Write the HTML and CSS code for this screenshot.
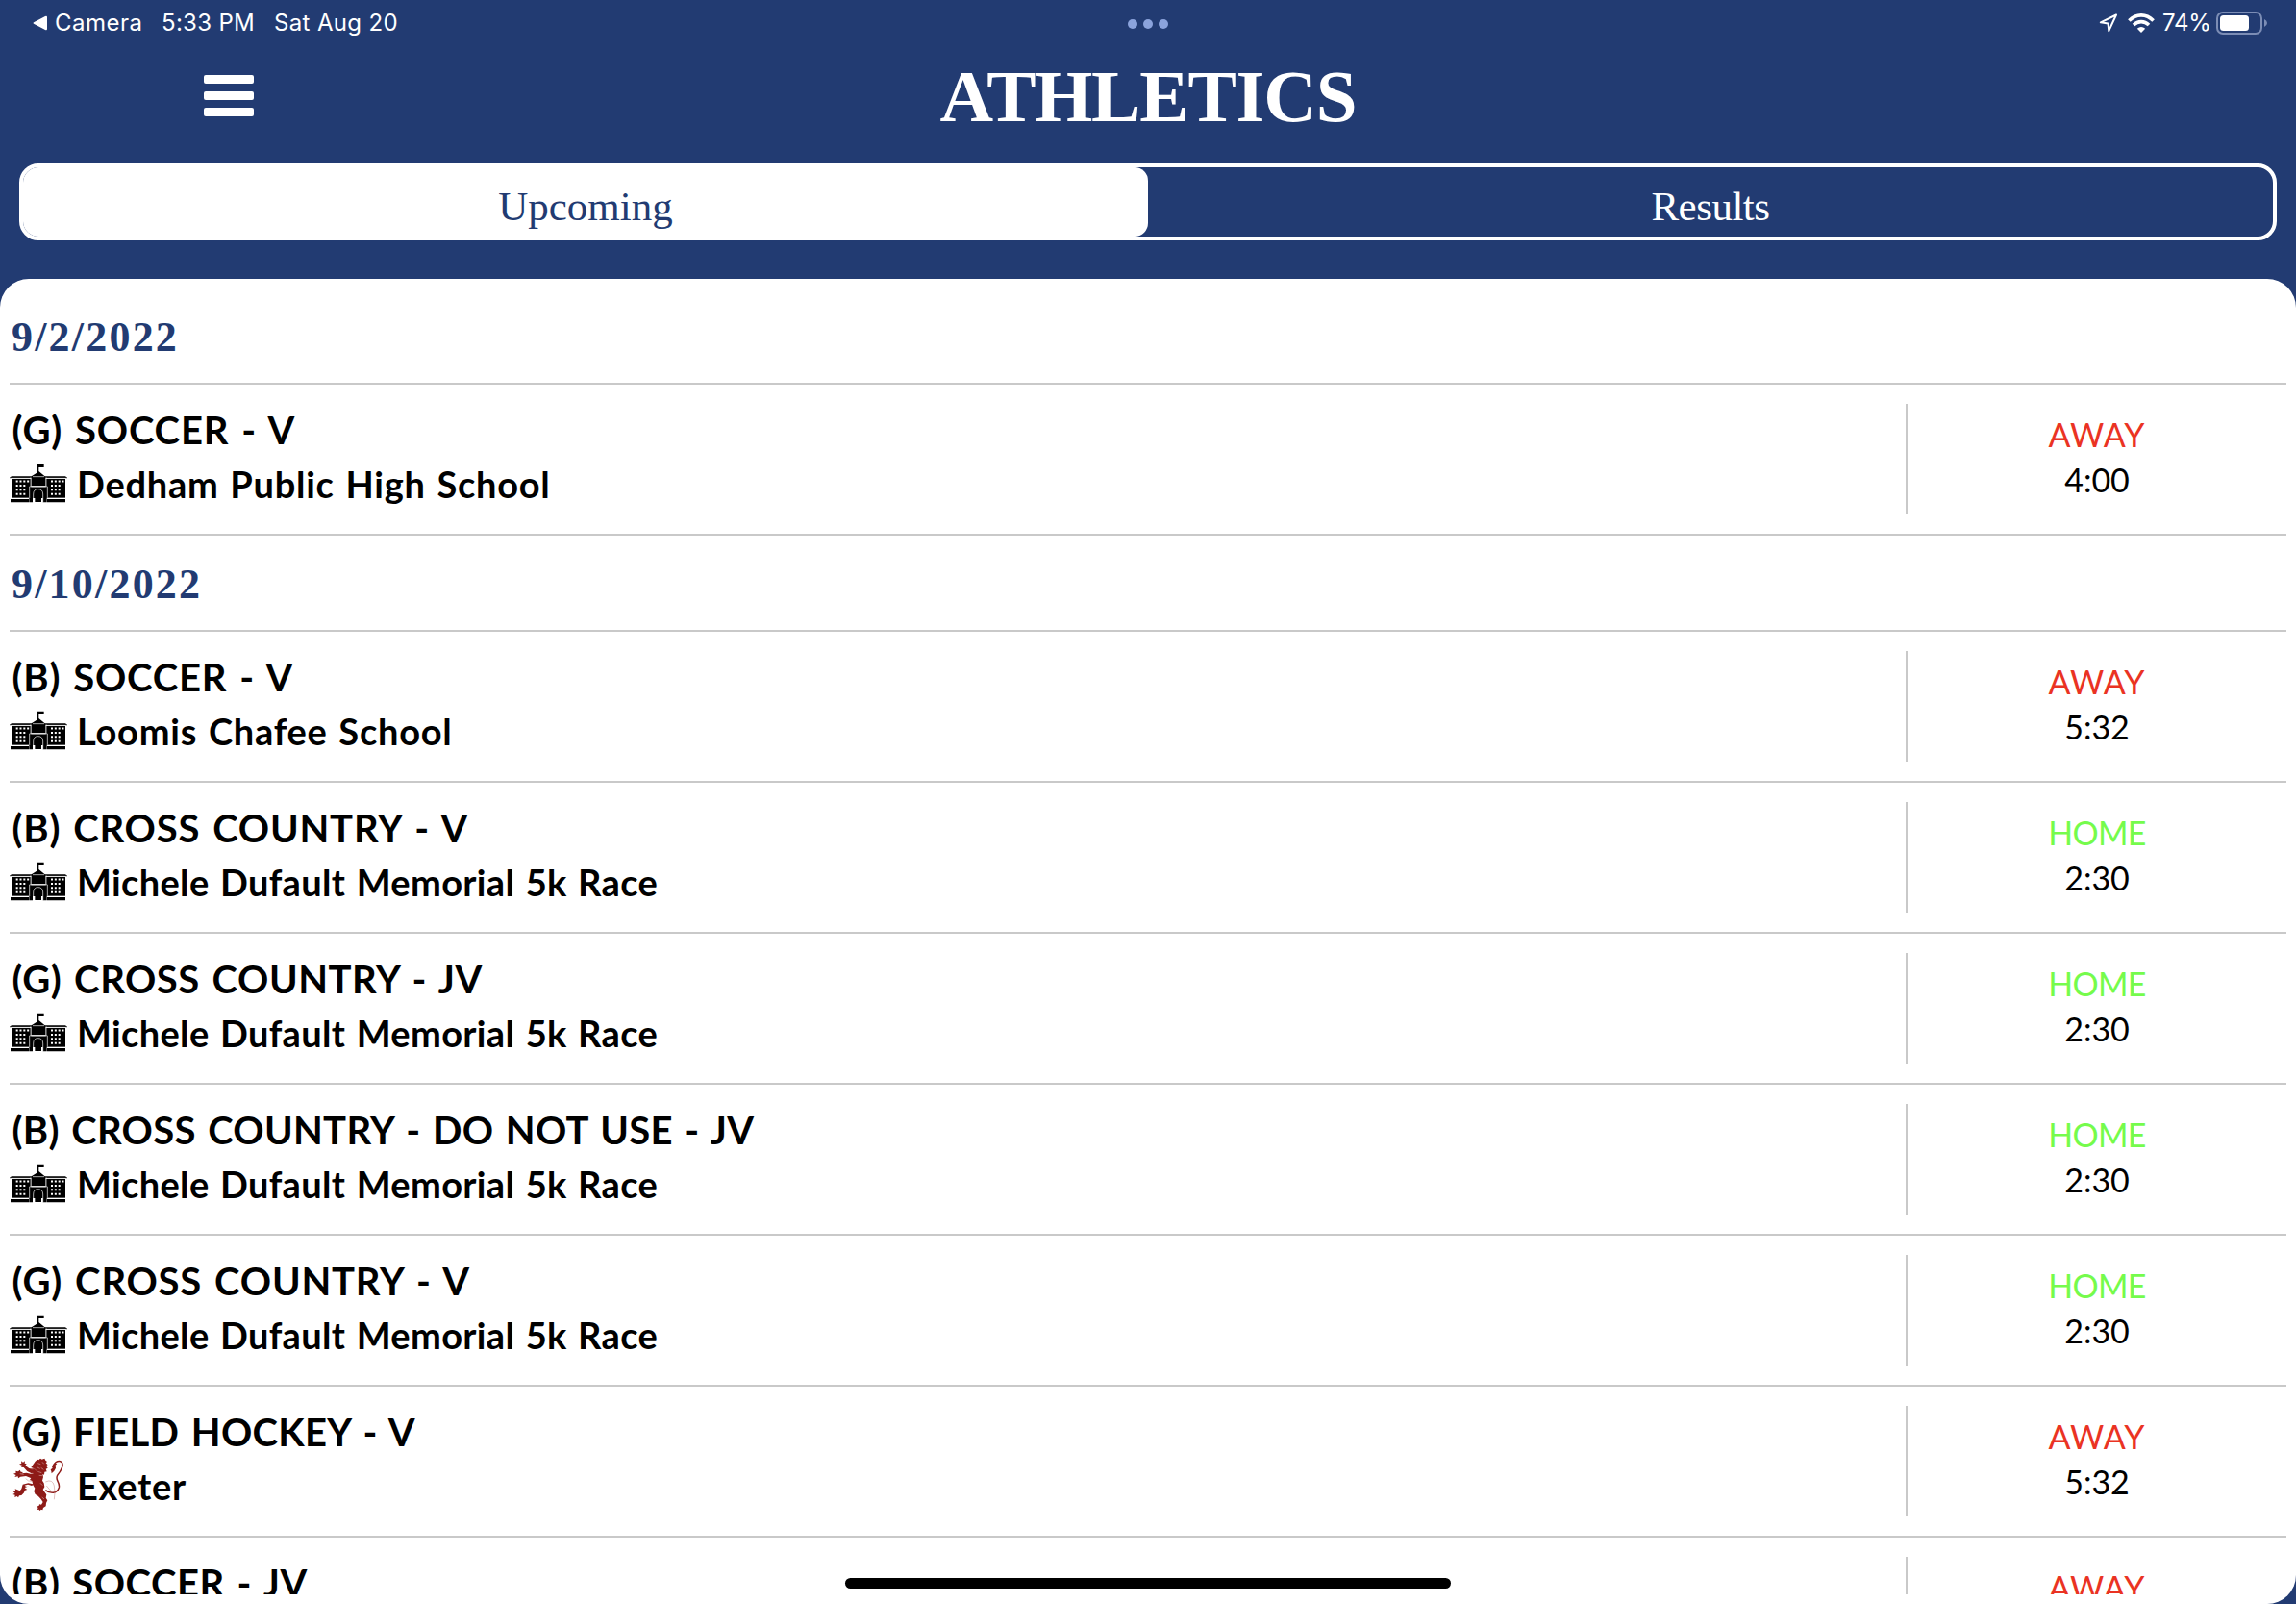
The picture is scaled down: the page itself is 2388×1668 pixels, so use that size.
FILE: index.html
```html
<!DOCTYPE html>
<html lang="en">
<head>
<meta charset="utf-8">
<title>Athletics</title>
<link rel="stylesheet" href="styles.css">
</head>
<body>
<svg class="defs" aria-hidden="true">
  <symbol id="school" viewBox="30 25 180 123">
    <path d="M117 54V27h20v10h-16v12l19 16h64l6 4v2H30v-2l6-4h62l19-12z"/>
    <path d="M36 73h61v59H36zM143 73h61v59h-61zM98 67h44v28H98z"/>
    <path d="M94 98h52v35H94z"/>
    <path d="M33 136h57v10H33zM147 136h57v10h-57zM91 132h11v14H91zM134 132h12v14h-12z"/>
    <path fill="none" stroke="#fff" stroke-width="2" d="M32 71h64M144 71h64M96 68v28M144 68v28M92 96.500h56M102 66h36M92 97v35M148 97v35M33 134h57M148 134h57M104 145v-24q0-16 15-16t15 16v24"/>
    <path d="M109 145v-23q0-11 10-11t10 11v23z"/>
    <path fill="none" stroke="#fff" stroke-width="6" stroke-dasharray="6 5.500" d="M50 80.500h41M50 94h29M50 107h29M50 120h29M159 80.500h41M159 94h29M159 107h29M159 120h29"/>
  </symbol>
  <symbol id="lion" viewBox="30 52 180 180">
    <g fill="#8e1b18">
      <path d="M110 66l7-6 4 2 5-5 5 3 8-3 3 6 5 4-4 4 6 6-5 3 5 7-6 3 3 8-7 1-1 9-5-2 2 9-3 11 5 8 2 12-5 8 4 6 7 10-2 10 5 8-4 8-1 10-8 5-2 7-5-2-3 4-4-4-5 1 3-6-4-4 7-3 1-4 6 1 5-8-6-9-9-10-9-5-4-10 3-9-6-10-3-13-7-3 4-6-5-5 7-2-3-6 8-1-3-6 7-2-9-1-4-4 10-3-8-3z"/>
      <path d="M110 102l-13 1-12-6-11-12-8-1 4-5-10-4 7-3-1-7 6 4 6-4-1 7 6 2-4 5 12 9 11 2 12-2z"/>
      <path d="M112 122l-16-4-15-6-17 2-7 5-1-6-10 2 4-6-8-4 8-3-1-6 8 2 5-5 3 6 7 1-4 4 15-2 16 4 17 4z"/>
      <path d="M116 140l-8-3-9 5-12-4-10 3 7 5-7 3 8 5-8 3-2 7-8 8-7 1-3 6-4-4-7 3 1-7-7-2 7-4-6-5 8-1-2-7 8 3 7 3 5-6 4-14 17-4 15 3 14-2z"/>
      <path d="M169 72l-7 10 2 5-6 5 2 5 1 7 8-8 5-9-1-9 5-5z"/>
    </g>
    <path fill="none" stroke="#8e1b18" stroke-width="4.500" d="M166 80q8-16 22-14 10 4 6 18-5 14-14 24-6 9 0 20 6 11 4 20-5 14-18 16-14 1-24-8"/>
    <path fill="none" stroke="#c58784" stroke-width="1.500" d="M80 120q8 10 20 8M98 91q10-5 16 4M142 130q22-10 27 12 4 22 0 43M145 142q13 16 20 22"/>
    <path fill="none" stroke="#e6c9c7" stroke-width="1.500" d="M118 72l9 3M132 68l5 6M115 84l10 5M128 86l8 6M118 98l12 4M122 110l10 1M126 134l7 7M62 105l12 2M78 145l11-1M131 178l7 6"/>
  </symbol>
</svg>

<div class="app">
  <header class="status">
    <div class="status-side">
      <svg class="back" viewBox="0 0 15 16"><path d="M1.500 7L13 1q2-.8 2 1v12q0 1.800-2 1L1.500 9q-2-1 0-2z" fill="#fff"/></svg>
      <span class="camera">Camera</span>
      <span class="clock">5:33 PM</span>
      <span class="day">Sat Aug 20</span>
    </div>
    <div class="dots"><i></i><i></i><i></i></div>
    <div class="status-side end">
      <svg class="loc" viewBox="0 0 20 20"><path d="M18 1.500L1.800 9.300l7.700 1.200.8 7.700z" fill="none" stroke="#fff" stroke-width="2" stroke-linejoin="round"/></svg>
      <svg class="wifi" viewBox="0 0 28 20"><g fill="none" stroke="#fff" stroke-width="3.600"><path d="M1.400 7.600Q7 1.900 14 1.900t12.600 5.700"/><path d="M6 12q3.500-3.400 8-3.400t8 3.400"/></g><path d="M9.800 15.700q4.200-3.600 8.400 0L14 20z" fill="#fff"/></svg>
      <span class="percent">74%</span>
      <svg class="battery" viewBox="0 0 54 24"><rect x="1" y="1" width="46" height="22" rx="6" fill="none" stroke="#7c8db5" stroke-width="2"/><rect x="4" y="4" width="30" height="16" rx="3.500" fill="#fff"/><path d="M50 8q3 1.500 3 4t-3 4z" fill="#7c8db5"/></svg>
    </div>
  </header>

  <div class="titlebar">
    <div class="menu"><i></i><i></i><i></i></div>
    <h1>ATHLETICS</h1>
  </div>

  <nav class="tabs">
    <div class="tab active">Upcoming</div>
    <div class="tab results">Results</div>
  </nav>

  <main class="panel">
    <div class="list">
      <h2>9/2/2022</h2>
      <section class="game">
        <div class="info"><div class="sport">(G) SOCCER - V</div><div class="team wide"><svg class="crest"><use href="#school"/></svg>Dedham Public High School</div></div>
        <div class="side"><div class="away">AWAY</div><div>4:00</div></div>
      </section>
      <h2>9/10/2022</h2>
      <section class="game">
        <div class="info"><div class="sport">(B) SOCCER - V</div><div class="team wide"><svg class="crest"><use href="#school"/></svg>Loomis Chafee School</div></div>
        <div class="side"><div class="away">AWAY</div><div>5:32</div></div>
      </section>
      <section class="game">
        <div class="info"><div class="sport">(B) CROSS COUNTRY - V</div><div class="team"><svg class="crest"><use href="#school"/></svg>Michele Dufault Memorial 5k Race</div></div>
        <div class="side"><div class="home">HOME</div><div>2:30</div></div>
      </section>
      <section class="game">
        <div class="info"><div class="sport snug">(G) CROSS COUNTRY - JV</div><div class="team"><svg class="crest"><use href="#school"/></svg>Michele Dufault Memorial 5k Race</div></div>
        <div class="side"><div class="home">HOME</div><div>2:30</div></div>
      </section>
      <section class="game">
        <div class="info"><div class="sport tight">(B) CROSS COUNTRY - DO NOT USE - JV</div><div class="team"><svg class="crest"><use href="#school"/></svg>Michele Dufault Memorial 5k Race</div></div>
        <div class="side"><div class="home">HOME</div><div>2:30</div></div>
      </section>
      <section class="game">
        <div class="info"><div class="sport">(G) CROSS COUNTRY - V</div><div class="team"><svg class="crest"><use href="#school"/></svg>Michele Dufault Memorial 5k Race</div></div>
        <div class="side"><div class="home">HOME</div><div>2:30</div></div>
      </section>
      <section class="game">
        <div class="info"><div class="sport tight">(G) FIELD HOCKEY - V</div><div class="team wide"><svg class="crest lion"><use href="#lion"/></svg>Exeter</div></div>
        <div class="side"><div class="away">AWAY</div><div>5:32</div></div>
      </section>
      <section class="game">
        <div class="info"><div class="sport snug">(B) SOCCER - JV</div></div>
        <div class="side"><div class="away">AWAY</div></div>
      </section>
    </div>
  </main>
  <div class="home-indicator"></div>
</div>
</body>
</html>
```
FILE: styles.css
```css
* { box-sizing: border-box; }
body { margin: 0; background: #223b72; font-family: Lato, "Open Sans", sans-serif; color: #000; }
.defs { display: none; }
.app { position: relative; height: 1668px; display: flex; flex-direction: column; overflow: hidden; }

.status { height: 50px; display: flex; justify-content: space-between; align-items: flex-start; padding: 0 29px 0 34px; color: #fff; font: 400 24px/47px Inter, sans-serif; }
.status-side { flex: 1; display: flex; align-items: center; height: 47px; white-space: nowrap; }
.status-side.end { justify-content: flex-end; }
.back { width: 15px; height: 16px; margin-right: 8px; }
.camera { width: 111px; letter-spacing: .5px; }
.clock { width: 117px; letter-spacing: .3px; }
.day { letter-spacing: .35px; }
.dots { display: flex; gap: 6px; padding-top: 20px; margin-left: -5px; }
.dots i { width: 10px; height: 10px; border-radius: 50%; background: #8ba3dc; }
.loc { width: 20px; height: 20px; margin-right: 10px; }
.wifi { width: 28px; height: 20px; margin-right: 8px; }
.percent { width: 56px; letter-spacing: -.2px; }
.battery { width: 54px; height: 24px; margin-top: 1px; }

.titlebar { height: 120px; display: grid; grid-template-columns: 1fr auto 1fr; align-items: start; }
.menu { display: flex; flex-direction: column; gap: 8px; width: 52px; margin: 28px 0 0 212px; }
.menu i { height: 9px; border-radius: 2px; background: #fff; }
h1 { margin: 0; color: #fff; font: 700 77px/101px "Liberation Serif", serif; letter-spacing: -1.2px; grid-column: 2; }

.tabs { height: 80px; margin: 0 20px; border: 4px solid #fff; border-radius: 20px; display: flex; flex: none; overflow: hidden; font: 400 43px/82px "Liberation Serif", serif; text-align: center; color: #fff; }
.tab { flex: 1; height: 72px; }
.tab.active { background: #fff; color: #223b72; border-radius: 0 14px 14px 0; }
.tab.results { letter-spacing: -.5px; }

.panel { flex: 1; min-height: 0; margin-top: 40px; padding: 10px 10px; background: #fff; border-radius: 30px; }
.list { height: 1358px; overflow: hidden; }
h2 { margin: 0; height: 100px; border-bottom: 2px solid #c9c9c9; padding-left: 2px; color: #223b72; font: 700 44px/102px "Liberation Serif", serif; letter-spacing: 2.2px; }
.game { display: flex; height: 157px; padding: 20px 0; border-bottom: 2px solid #c9c9c9; }
.info { flex: 1; }
.sport { padding-left: 2.5px; font-size: 40px; font-weight: 700; line-height: 54px; letter-spacing: .8px; word-spacing: 2.5px; white-space: nowrap; }
.sport.snug { letter-spacing: .55px; }
.sport.tight { letter-spacing: .3px; }
.team { display: flex; align-items: center; gap: 10px; height: 58px; font-size: 38px; font-weight: 700; line-height: 58px; letter-spacing: .35px; word-spacing: 1.8px; white-space: nowrap; }
.team.wide { letter-spacing: .75px; }
.crest { width: 60px; height: 41px; margin-top: -2px; }
.crest.lion { height: 60px; margin-top: 0; }
.side { width: 396px; height: 115px; border-left: 2px solid #c9c9c9; display: flex; flex-direction: column; padding-top: 8px; text-align: center; font-size: 34px; line-height: 47px; }
.away { color: #ea3323; letter-spacing: 1px; }
.home { color: #75fb4c; letter-spacing: -.7px; }
.home-indicator { position: absolute; left: 879px; bottom: 16px; width: 630px; height: 11px; border-radius: 6px; background: #000; }
```
